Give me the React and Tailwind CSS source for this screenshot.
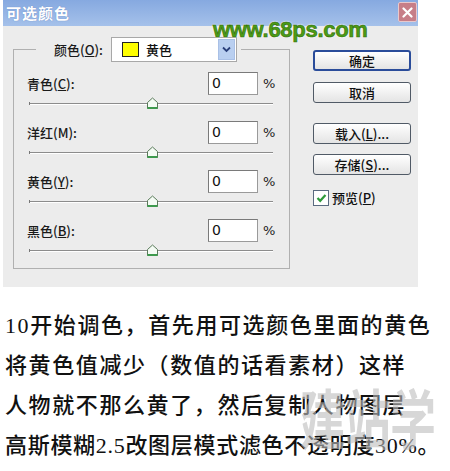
import React from "react";

const ui = { fontFamily: '"Noto Sans CJK SC", "DejaVu Sans", sans-serif' };

function Thumb() {
  return (
    <svg width="13" height="13" viewBox="0 0 13 13" className="block">
      <path d="M1.5 5.5 L6.5 1 L11.5 5.5 L11.5 11.5 L1.5 11.5 Z" fill="#f4fbf4" stroke="#5a7a5a" strokeWidth="1" />
      <path d="M1.5 11 L11.5 11" stroke="#3d9a4d" strokeWidth="2" />
    </svg>
  );
}

function Row({ label, u, rest }) {
  return (
    <div className="flex flex-col h-[49px]">
      <div className="flex items-center h-[23px]">
        <div className="w-[181px] text-[13px] font-medium text-[#1a1a1a] pt-[1px]">
          {label}(<span className="underline">{u}</span>{rest}):
        </div>
        <div className="w-[50px] h-[23px] bg-white border border-[#9a9a9a] border-t-[#7a7a7a] border-l-[#7a7a7a] flex items-center pl-[3px] text-[14px] text-[#111]" style={{ fontFamily: '"DejaVu Sans", sans-serif' }}>
          0
        </div>
        <div className="ml-[5px] text-[13px] text-[#222]" style={{ fontFamily: '"DejaVu Sans", sans-serif' }}>%</div>
      </div>
      <div className="relative h-[26px] ml-[3px] w-[243px]">
        <div className="absolute left-0 right-0 top-[8px] h-[1px] bg-[#8c8c8c]" />
        <div className="absolute left-0 right-0 top-[9px] h-[1px] bg-white" />
        <div className="absolute left-[-1px] top-[7px] w-[1px] h-[3px] bg-[#777]" />
        <div className="absolute left-[116px] top-[2px]">
          <Thumb />
        </div>
      </div>
    </div>
  );
}

function Btn({ children, primary }) {
  return (
    <div
      className={
        "w-[98px] h-[21px] rounded-[3px] flex items-center justify-center text-[13px] font-medium text-[#111] bg-gradient-to-b from-white to-[#e4e4e4] " +
        (primary ? "border-2 border-[#2a4c9a]" : "border border-[#505a66]")
      }
    >
      {children}
    </div>
  );
}

export default function App() {
  return (
    <div className="relative w-[450px] h-[471px] bg-white overflow-hidden" style={ui}>
      {/* Dialog */}
      <div className="ml-[3px] w-[415px] h-[287px] bg-[#ececec] flex flex-col">
        <div className="h-[26px] bg-gradient-to-b from-[#86a9e0] to-[#a5c1ea] flex items-center justify-between pl-[3px] pr-[1px]">
          <span className="text-white font-bold text-[15px] tracking-[1px]" style={{ textShadow: "0 0 1px #5a7ab8" }}>可选颜色</span>
          <div className="w-[19px] h-[20px] mt-[-2px] rounded-[2px] bg-[#c77e88] border border-[#e8c8cc] flex items-center justify-center">
            <svg width="11" height="11" viewBox="0 0 11 11">
              <path d="M1.5 1.5 L9.5 9.5 M9.5 1.5 L1.5 9.5" stroke="white" strokeWidth="2.2" strokeLinecap="round" />
            </svg>
          </div>
        </div>
        <div className="flex pl-[10px] pt-[11px]">
          <fieldset className="w-[277px] h-[232px] border border-[#b0b0b0] pl-[13px] pr-0 pb-0 pt-[10px] m-0">
            <legend className="ml-[9px] px-[4px] flex items-center">
              <span className="text-[13px] font-medium text-[#1a1a1a] ml-[14px] mr-[8px]">
                颜色(<span className="underline">O</span>):
              </span>
              <div className="w-[126px] h-[25px] bg-white border border-[#a8a8a8] flex items-center pl-[10px] pr-[1px]">
                <div className="w-[17px] h-[15px] bg-[#ffff00] border border-[#222]" />
                <span className="ml-[7px] text-[13px] font-medium text-[#111] flex-1">黄色</span>
                <div className="w-[17px] h-[21px] bg-[#b9cff0] border border-[#a9c0e6] flex items-center justify-center">
                  <svg width="9" height="7" viewBox="0 0 9 7">
                    <path d="M1 1.5 L4.5 5 L8 1.5" stroke="#2a3f7a" strokeWidth="1.8" fill="none" />
                  </svg>
                </div>
              </div>
            </legend>
            <Row label="青色" u="C" rest="" />
            <Row label="洋红" u="" rest="M" />
            <Row label="黄色" u="Y" rest="" />
            <Row label="黑色" u="B" rest="" />
          </fieldset>
          <div className="ml-[23px] pt-[13px] flex flex-col">
            <Btn primary>确定</Btn>
            <div className="h-[11px]" />
            <Btn>取消</Btn>
            <div className="h-[20px]" />
            <Btn>
              载入(<span className="underline">L</span>)...
            </Btn>
            <div className="h-[10px]" />
            <Btn>
              存储(<span className="underline">S</span>)...
            </Btn>
            <div className="flex items-center mt-[13px]">
              <div className="w-[16px] h-[16px] bg-white border border-[#5a6a80] flex items-center justify-center">
                <svg width="11" height="10" viewBox="0 0 11 10">
                  <path d="M1.5 5 L4.2 7.8 L9.5 2" stroke="#2e9a3a" strokeWidth="2.2" fill="none" />
                </svg>
              </div>
              <span className="ml-[3px] text-[13px] font-medium text-[#111]">
                预览(<span className="underline">P</span>)
              </span>
            </div>
          </div>
        </div>
      </div>

      {/* 68ps watermark */}
      <div
        className="absolute left-[213px] top-[13px] text-[22px] font-bold text-[#4c9c16] tracking-[-0.3px]"
        style={{ fontFamily: '"Liberation Sans", sans-serif', WebkitTextStroke: "0.6px #2f6a08", textShadow: "0 0 2px #fff, 0 0 2px #fff" }}
      >
        www.68ps.com
      </div>

      {/* Body text */}
      <div
        className="pl-[5px] pt-[19px] text-[22px] leading-[40px] tracking-[1.6px] text-[#111] font-medium whitespace-nowrap"
        style={{ fontFamily: '"Liberation Serif", "Noto Sans CJK SC", serif' }}
      >
        <div>10开始调色，首先用可选颜色里面的黄色</div>
        <div>将黄色值减少（数值的话看素材）这样</div>
        <div>人物就不那么黄了，然后复制人物图层</div>
        <div className="tracking-[0.7px]">高斯模糊2.5改图层模式滤色不透明度30%。</div>
      </div>

      {/* 建站学 watermark */}
      <div
        className="absolute left-[300px] top-[384px] text-[46px] font-bold text-[#bdbdbd] opacity-60 leading-none tracking-[-1px] scale-y-[1.4] origin-top whitespace-nowrap"
        style={{ fontFamily: '"Noto Sans CJK SC", sans-serif' }}
      >
        建站学
      </div>
    </div>
  );
}
